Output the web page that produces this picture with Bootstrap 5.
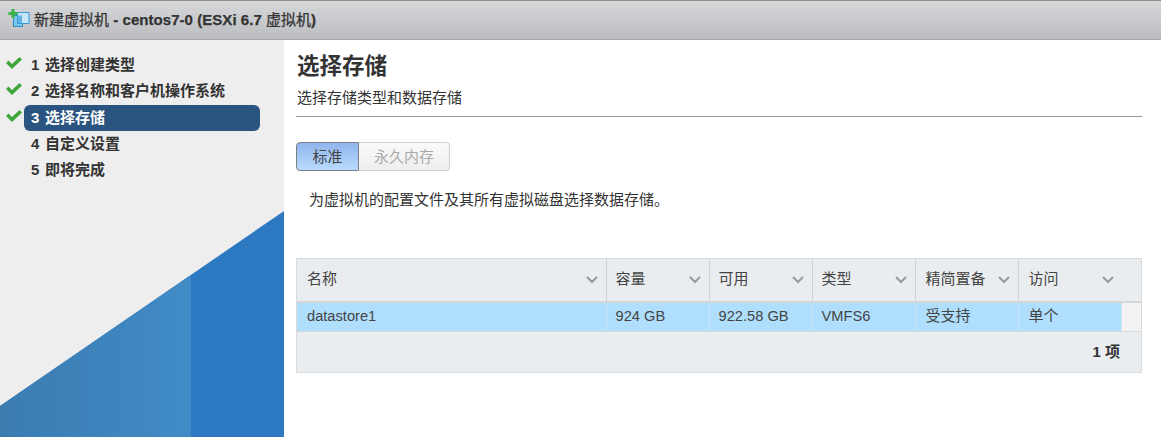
<!DOCTYPE html>
<html lang="zh-CN">
<head>
  <meta charset="UTF-8" />
  <meta name="viewport" content="width=device-width, initial-scale=1.0"/>
  <title>新建虚拟机 - centos7-0</title>
  <link href="https://cdn.jsdelivr.net/npm/bootstrap@5.3.0/dist/css/bootstrap.min.css" rel="stylesheet"/>
  <script src="https://cdn.jsdelivr.net/npm/bootstrap@5.3.0/dist/js/bootstrap.bundle.min.js"></script>
  <style>
    html, body {
      height: 437px;
      overflow: hidden;
    }
    body {
      font-family: "Liberation Sans", "Noto Sans CJK SC", sans-serif;
      font-size: 15px;
      line-height: 20px;
      color: #333;
      background-color: #fff;
    }
    .title-bar {
      height: 40px;
      padding-left: 8px;
      color: #333;
      background: linear-gradient(#d6d7d9, #bcbdc0);
      border-top: 1px solid #8f8f8f;
      border-bottom: 1px solid #a8a8a8;
    }
    .title-bar span {
      -webkit-text-stroke: 0.25px #333;
    }
    .title-latin {
      font-weight: 700;
      font-size: 15px;
      letter-spacing: 0.05px;
      -webkit-text-stroke: 0;
    }
    .wizard-side {
      width: 284px;
      height: 397px;
      padding-top: 12px;
      background-color: #eeeeee;
    }
    .wizard-art {
      left: 0;
      bottom: 0;
    }
    .step-row {
      height: 26.3px;
      position: relative;
    }
    .step-check {
      position: absolute;
      left: 6px;
      top: 5px;
    }
    .step-label {
      position: absolute;
      left: 24px;
      top: 0;
      width: 236px;
      height: 26px;
      padding: 3px 0 0 7px;
      font-weight: 700;
      word-spacing: 1.5px;
      color: #333;
      border-radius: 6px;
      white-space: nowrap;
    }
    .step-on {
      background-color: #2a5581;
      color: #fff;
    }
    .wizard-main {
      padding: 13px 19px 0 12px;
    }
    .page-head {
      font-size: 22.5px;
      line-height: 28px;
      font-weight: 700;
      color: #333;
      margin: 0 1px 0;
    }
    .page-sub {
      margin: 7px 0 0;
      padding: 0 1px 8px;
      border-bottom: 1px solid #999;
      height: 29px;
      line-height: 20px;
    }
    .store-tabs {
      margin-top: 25px;
      height: 29px;
    }
    .store-tab {
      height: 29px;
      line-height: 26px;
      padding: 0;
      text-align: center;
      font-size: 15px;
    }
    .tab-std {
      width: 63px;
      color: #444;
      background: linear-gradient(#90b5ec, #b9dbff);
      border: 1px solid #7b7f86;
      border-radius: 4px 0 0 4px;
    }
    .tab-pmem {
      width: 91px;
      color: #aaa;
      background: linear-gradient(#fafafa, #eeeeee);
      border: 1px solid #cfcfcf;
      border-left: 0;
      border-radius: 0 4px 4px 0;
    }
    .store-note {
      margin: 19px 0 0 13px;
    }
    .store-grid {
      width: 846px;
      margin-top: 48px;
      height: 115px;
      background-color: #eaedf0;
      border: 1px solid #d8dadc;
    }
    .store-table {
      table-layout: fixed;
      border-collapse: collapse;
      width: 844px;
      margin: 0;
    }
    .store-table th {
      height: 43px;
      padding: 0 0 3px 10px;
      font-weight: 400;
      color: #444;
      background-color: #eaedf0;
      border-right: 1px solid #cfd1d3;
      border-bottom: 2px solid #d4d6d8;
      position: relative;
    }
    .store-table th:last-child {
      border-right: 0;
    }
    .store-table td {
      height: 29px;
      padding: 0 0 1px 10px;
      font-size: 14.67px;
      color: #444;
      background-color: #b0dffe;
      border-right: 1px solid #cde3f3;
      border-bottom: 1px solid #d8dadc;
    }
    .store-table th.cell-tight,
    .store-table td.cell-tight {
      padding-left: 9px;
    }
    .store-table td.cell-cjk {
      font-size: 15px;
    }
    .store-table td.gutter {
      padding: 0;
      background-color: #f2f2f2;
      border-right: 0;
    }
    .sort-caret {
      position: absolute;
      right: 8px;
      top: 17px;
    }
    .sort-last {
      right: 27px;
    }
    .col-name { width: 309px; }
    .col-data { width: 103px; }
    .col-gutter { width: 20px; }
    .grid-foot {
      height: 41px;
      padding: 10px 21px 0 0;
      text-align: right;
      font-weight: 700;
      color: #333;
    }
  </style>
</head>
<body>
  <div class="title-bar d-flex align-items-center gap-1">
    <svg width="22" height="22" viewBox="0 0 22 22" class="flex-shrink-0">
      <rect x="5.500" y="6.500" width="9" height="11" fill="#7cc6ee" stroke="#2f8fc9"/>
      <rect x="9.500" y="3.500" width="11.500" height="11" fill="#c4e6f8" stroke="#3b9bd8"/>
      <rect x="10" y="6.500" width="4" height="7.500" fill="#5bb4e4"/>
      <path d="M3.500 0h3v3h3v3h-3v3h-3V6h-3V3h3z" fill="#3fb24a"/>
    </svg>
    <span>新建虚拟机<span class="title-latin"> - centos7-0 (ESXi 6.7 </span>虚拟机<span class="title-latin">)</span></span>
  </div>

  <div class="d-flex">
    <div class="wizard-side flex-shrink-0 position-relative">
      <svg class="wizard-art position-absolute" width="284" height="226" viewBox="0 0 284 226">
        <defs>
          <linearGradient id="artFade" x1="0" x2="1" y1="0" y2="0">
            <stop offset="0" stop-color="#3b7cb0"/>
            <stop offset="1" stop-color="#408bc7"/>
          </linearGradient>
        </defs>
        <polygon points="284,0 284,226 0,226 0,195" fill="#2c79c2"/>
        <polygon points="191,64 191,226 0,226 0,195" fill="url(#artFade)"/>
      </svg>
      <div class="step-row">
        <svg class="step-check" width="16" height="12" viewBox="0 0 16 12"><path d="M0 6l2.500-2.500L6 7l7.500-7L16 2.500 6 12z" fill="#3ea53a"/></svg>
        <div class="step-label">1 选择创建类型</div>
      </div>
      <div class="step-row">
        <svg class="step-check" width="16" height="12" viewBox="0 0 16 12"><path d="M0 6l2.500-2.500L6 7l7.500-7L16 2.500 6 12z" fill="#3ea53a"/></svg>
        <div class="step-label">2 选择名称和客户机操作系统</div>
      </div>
      <div class="step-row">
        <svg class="step-check" width="16" height="12" viewBox="0 0 16 12"><path d="M0 6l2.500-2.500L6 7l7.500-7L16 2.500 6 12z" fill="#3ea53a"/></svg>
        <div class="step-label step-on">3 选择存储</div>
      </div>
      <div class="step-row">
        <div class="step-label">4 自定义设置</div>
      </div>
      <div class="step-row">
        <div class="step-label">5 即将完成</div>
      </div>
    </div>

    <div class="wizard-main flex-grow-1">
      <h1 class="page-head">选择存储</h1>
      <p class="page-sub">选择存储类型和数据存储</p>

      <div class="store-tabs d-flex">
        <button type="button" class="store-tab tab-std">标准</button>
        <button type="button" class="store-tab tab-pmem">永久内存</button>
      </div>

      <p class="store-note">为虚拟机的配置文件及其所有虚拟磁盘选择数据存储。</p>

      <div class="store-grid">
        <table class="store-table">
          <colgroup>
            <col class="col-name"><col class="col-data"><col class="col-data"><col class="col-data"><col class="col-data"><col class="col-data"><col class="col-gutter">
          </colgroup>
          <thead>
            <tr>
              <th>名称<svg class="sort-caret" width="12" height="8" viewBox="0 0 12 8"><path d="M1 1l5 5 5-5" fill="none" stroke="#999" stroke-width="2"/></svg></th>
              <th class="cell-tight">容量<svg class="sort-caret" width="12" height="8" viewBox="0 0 12 8"><path d="M1 1l5 5 5-5" fill="none" stroke="#999" stroke-width="2"/></svg></th>
              <th class="cell-tight">可用<svg class="sort-caret" width="12" height="8" viewBox="0 0 12 8"><path d="M1 1l5 5 5-5" fill="none" stroke="#999" stroke-width="2"/></svg></th>
              <th class="cell-tight">类型<svg class="sort-caret" width="12" height="8" viewBox="0 0 12 8"><path d="M1 1l5 5 5-5" fill="none" stroke="#999" stroke-width="2"/></svg></th>
              <th>精简置备<svg class="sort-caret" width="12" height="8" viewBox="0 0 12 8"><path d="M1 1l5 5 5-5" fill="none" stroke="#999" stroke-width="2"/></svg></th>
              <th colspan="2">访问<svg class="sort-caret sort-last" width="12" height="8" viewBox="0 0 12 8"><path d="M1 1l5 5 5-5" fill="none" stroke="#999" stroke-width="2"/></svg></th>
            </tr>
          </thead>
          <tbody>
            <tr>
              <td>datastore1</td>
              <td class="cell-tight">924 GB</td>
              <td class="cell-tight">922.58 GB</td>
              <td class="cell-tight">VMFS6</td>
              <td class="cell-cjk">受支持</td>
              <td class="cell-cjk">单个</td>
              <td class="gutter"></td>
            </tr>
          </tbody>
        </table>
        <div class="grid-foot">1 项</div>
      </div>
    </div>
  </div>
</body>
</html>
